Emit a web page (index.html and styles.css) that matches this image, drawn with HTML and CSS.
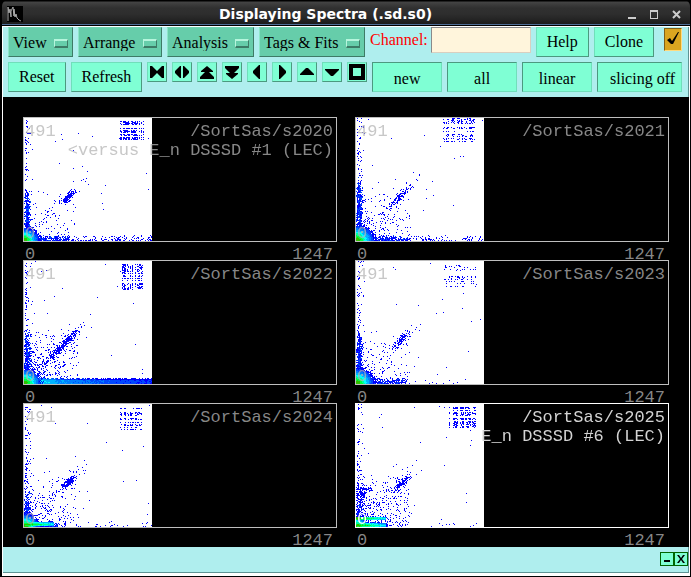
FILE: index.html
```html
<!DOCTYPE html>
<html lang="en">

<head>
    <meta charset="utf-8">
    <title>Displaying Spectra (.sd.s0)</title>
    <link rel="stylesheet" href="styles.css">
</head>

<body>
    <div class="window">
        <header class="titlebar">
            <svg class="app-icon" width="16" height="16" viewBox="0 0 16 16">
                <rect width="16" height="16" fill="#000"/>
                <path d="M1 15V1l1 6 1-4 1 8V5l2-4 1 9V3l1 8 1-3 1 4 2 2 2 1" fill="none" stroke="#aaa"/>
            </svg>
            <h1>Displaying Spectra (.sd.s0)</h1>
            <div class="controls">
                <button aria-label="Minimize"><svg width="9" height="9"><path d="M0 7h8v2H0z"/></svg></button>
                <button aria-label="Maximize"><svg width="9" height="9"><path d="M0 0h8v9H0zM1 2v6h6V2z" fill-rule="evenodd"/></svg></button>
                <button aria-label="Close"><svg width="9" height="9"><path d="M1 1l7 7M8 1L1 8" stroke="#ccc" stroke-width="2"/></svg></button>
            </div>
        </header>

        <main class="client">
            <div class="toolbar">
                <div class="row">
                    <span class="menu"><select aria-label="View"><option>View</option></select></span>
                    <span class="menu"><select aria-label="Arrange"><option>Arrange</option></select></span>
                    <span class="menu"><select aria-label="Analysis"><option>Analysis</option></select></span>
                    <span class="menu"><select aria-label="Tags and fits"><option>Tags &amp; Fits</option></select></span>
                    <div class="field">
                        <label for="channel">Channel:</label>
                        <input id="channel" type="text">
                    </div>
                    <button class="btn">Help</button>
                    <button class="btn">Clone</button>
                    <label class="tick">
                        <input type="checkbox" aria-label="Active" checked>
                        <svg width="14" height="14" viewBox="0 0 14 14"><path d="M1 8l3-2 2 3 6-9h1L7 12H5z"/></svg>
                    </label>
                </div>
                <div class="row">
                    <button class="btn">Reset</button>
                    <button class="btn">Refresh</button>
                    <button class="icon" aria-label="Squeeze"><svg width="14" height="12" viewBox="0 0 14 12"><path d="M0 0h2l5 5 5-5h2v12h-2L7 7l-5 5H0z"/></svg></button>
                    <button class="icon" aria-label="Stretch"><svg width="14" height="12" viewBox="0 0 14 12"><path d="M6 0v12H5L0 7V5l5-5zM8 0v12h1l5-5V5L9 0z"/></svg></button>
                    <button class="icon" aria-label="Scale up"><svg width="14" height="13" viewBox="0 0 14 13"><path d="M7 0l6 5v1H9l5 5v2H0v-2l5-5H1V5z"/></svg></button>
                    <button class="icon" aria-label="Scale down"><svg width="14" height="13" viewBox="0 0 14 13"><path d="M7 13l6-5V7H9l5-5V0H0v2l5 5H1v1z"/></svg></button>
                    <button class="icon" aria-label="Left"><svg width="14" height="14" viewBox="0 0 14 14"><path d="M10 0v14H9L3 8V6l6-6z"/></svg></button>
                    <button class="icon" aria-label="Right"><svg width="14" height="14" viewBox="0 0 14 14"><path d="M4 0v14h1l6-6V6L5 0z"/></svg></button>
                    <button class="icon" aria-label="Up"><svg width="14" height="12" viewBox="0 0 14 12"><path d="M6 2h2l6 6v1H0V8z"/></svg></button>
                    <button class="icon" aria-label="Down"><svg width="14" height="12" viewBox="0 0 14 12"><path d="M6 10h2l6-6V3H0v1z"/></svg></button>
                    <button class="icon" aria-label="Full"><svg width="16" height="16" viewBox="0 0 16 16"><path d="M0 0h16v16H0zM4 4v8h8V4z" fill-rule="evenodd"/></svg></button>
                    <button class="btn mode">new</button>
                    <button class="btn mode">all</button>
                    <button class="btn mode">linear</button>
                    <button class="btn mode wide">slicing off</button>
                </div>
            </div>

            <div class="spectra" id="spectra"></div>

            <footer class="footer">
                <button aria-label="Shrink"><svg width="10" height="10"><path d="M2 6h6v2H2z"/></svg></button>
                <button aria-label="Close panel"><svg width="10" height="10"><path d="M1 1h2l2 3 2-3h2L6 5l3 4H7L5 6 3 9H1l3-4z"/></svg></button>
            </footer>
        </main>
    </div>
    <script src="spectra.js"></script>
</body>

</html>
```
FILE: styles.css
```css
* {
    box-sizing: border-box;
}

body {
    margin: 0;
    background-color: #000;
    font: 16px "Liberation Serif", serif;
}

button {
    font: inherit;
    padding: 0;
    border: 0;
}

svg {
    display: block;
}

.window {
    display: flex;
    flex-direction: column;
    min-height: 100vh;
    padding: 0 1px 1px 2px;
    background-color: #000;
}

.titlebar {
    display: flex;
    align-items: center;
    height: 26px;
    padding: 2px 9px 0 5px;
    background: linear-gradient(#000 1px, #444 2px, #303030 8px, #2e2e2e 14px, #1c1c1c 24px, #4f6f98 24px, #4f6f98 25px, #000 25px);
    border-radius: 6px 6px 0 0;
}

.titlebar h1 {
    flex: 1;
    margin: 0;
    font: bold 14px/20px "DejaVu Sans", sans-serif;
    text-align: center;
    color: #fff;
}

.controls {
    display: flex;
    gap: 13px;
}

.controls button {
    background: none;
    fill: #ccc;
}

.client {
    flex: 1;
    display: flex;
    flex-direction: column;
    border: solid #fff;
    border-width: 1px 1px 3px 1px;
    background-color: #afeeee;
}

.toolbar {
    display: flex;
    flex-direction: column;
    gap: 5px;
    padding: 0 6px 5px 5px;
    border-right: 1px solid #5f9494;
}

.row {
    display: flex;
    align-items: flex-start;
    gap: 5px;
}

.menu {
    position: relative;
}

.menu select {
    appearance: none;
    display: block;
    height: 30px;
    padding: 0 25px 0 4px;
    font: inherit;
    color: #000;
    background-color: #66cdaa;
    border: 1px solid;
    border-color: #70d4b2 #3d7b66 #3d7b66 #8ce6c8;
    border-radius: 0;
}

/* raised bar of the option menu */
.menu::after {
    content: "";
    position: absolute;
    right: 5px;
    top: 12px;
    width: 12px;
    height: 5px;
    background-color: #66cdaa;
    border: solid;
    border-width: 2px 1px;
    border-color: #b5f5dc #3d7b66 #3d7b66 #b5f5dc;
    pointer-events: none;
}

.field {
    flex: 1;
    display: flex;
    gap: 3px;
    min-width: 0;
}

.field label {
    padding-top: 4px;
    line-height: 18px;
    color: #f00;
}

.field input {
    flex: 1;
    min-width: 0;
    height: 26px;
    margin: 0;
    padding: 0 4px;
    font: inherit;
    background-color: #fff5dc;
    border: 1px solid;
    border-color: #8a8a8a #d8cfc0 #d8cfc0 #8a8a8a;
}

.btn {
    height: 30px;
    padding: 0 10px;
    white-space: nowrap;
    background-color: #7fffd4;
    border: 1px solid;
    border-color: #70dfba #4c997f #4c997f #70dfba;
}

.mode {
    flex: 1 1 70px;
    padding: 4px 0 0;
    border-color: #4c997f #70dfba #70dfba #4c997f;
}

.wide {
    flex-basis: 85px;
    padding-left: 6px;
}

.icon {
    display: flex;
    align-items: center;
    justify-content: center;
    width: 20px;
    height: 20px;
    background-color: #7fffd4;
    border: 1px solid;
    border-color: #70dfba #4c997f #4c997f #70dfba;
}

.tick {
    position: relative;
    margin-left: 5px;
    padding-top: 1px;
}

.tick input {
    appearance: none;
    display: block;
    width: 18px;
    height: 23px;
    margin: 0;
    background-color: #daa520;
    border: 1px solid;
    border-color: #80601a #ffdb80 #ffdb80 #80601a;
}

.tick svg {
    position: absolute;
    left: 2px;
    top: 5px;
}

.spectra {
    flex: 1;
    display: grid;
    grid-template-columns: 1fr 1fr;
    column-gap: 18px;
    align-content: start;
    padding: 20px 20px 1px;
    background-color: #000;
    font: 17px/19px "Liberation Mono", monospace;
}

.spectrum {
    color: rgba(180, 180, 180, 0.75);
}

.frame {
    position: relative;
    height: 125px;
    border: 1px solid #bebebe;
}

.frame canvas {
    display: block;
}

.ymax, .ymin, .name {
    position: absolute;
    left: 1px;
    top: 4px;
}

.ymin {
    top: auto;
    bottom: -2px;
}

.name {
    left: auto;
    right: 3px;
    text-align: right;
    white-space: nowrap;
}

.axis {
    display: flex;
    justify-content: space-between;
    height: 18px;
    padding: 3px 4px 0 2px;
}

.selected .frame {
    border-color: #fff;
}

.selected .name {
    color: #d3d3d3;
}

.selected .ymax, .selected .ymin {
    color: #fff;
}

.footer {
    display: flex;
    justify-content: flex-end;
    height: 26px;
    padding-top: 5px;
    border: solid #5f9494;
    border-width: 0 1px 1px 0;
}

.footer button {
    width: 14px;
    height: 14px;
    padding: 1px;
    background-color: #7fffd4;
    border: 1px solid #006400;
}
```
FILE: spectra.js
```javascript
var W = 128, H = 123;

// wall: height of the dense left edge, floor: length of the dense bottom edge
// blob: radius of the hot corner, peak: [x, y, half length, counts]
// block: x, y (from top), width, height, fill of the hit pattern top right
// halo: scattered counts around the corner
var spectra = [
    { name: "/SortSas/s2020", title: "<versus E_n DSSSD #1 (LEC)", wall: 36, floor: 46, blob: 15, peak: [44, 43, 5, 130], block: [95, 0, 25, 22, 0.55], halo: 110, tail: 130 },
    { name: "/SortSas/s2021", wall: 48, floor: 52, blob: 18, peak: [43, 43, 9, 110], block: [87, 0, 32, 25, 0.35], halo: 230, tail: 90 },
    { name: "/SortSas/s2022", wall: 40, floor: 128, blob: 17, peak: [38, 38, 15, 330], block: [98, 3, 21, 26, 0.4], halo: 480, tail: 80 },
    { name: "/SortSas/s2023", wall: 36, floor: 50, blob: 18, peak: [45, 43, 6, 110], block: [88, 4, 32, 22, 0.25], halo: 190, tail: 12 },
    { name: "/SortSas/s2024", wall: 20, floor: 34, blob: 15, peak: [45, 45, 5, 140], block: [96, 4, 25, 22, 0.4], halo: 260, tail: 30, bands: [[2, 4, 30]] },
    { name: "/SortSas/s2025", title: "E_n DSSSD #6 (LEC)", wall: 12, floor: 32, blob: 12, peak: [45, 43, 6, 110], block: [93, 3, 27, 21, 0.5], halo: 420, tail: 12, bands: [[1, 4, 30], [8, 3, 30]], bar: 37, selected: true }
];

var colors = ["#0000ff", "#0048ff", "#0080ff", "#00b4ff", "#00ffff", "#00ffa0", "#00ff40", "#30c000"];

var seed = 1;

function rnd() {
    seed = (seed * 16807) % 2147483647;
    return seed / 2147483647;
}

function gauss() {
    return rnd() + rnd() + rnd() + rnd() - 2;
}

function draw(canvas, s) {
    var ctx = canvas.getContext("2d");
    var x, y, i;

    // y counts up from the bottom edge
    function dot(x, y, level) {
        x = Math.round(x);
        y = Math.round(y);
        if (x < 0 || y < 0) return;
        ctx.fillStyle = colors[Math.max(0, Math.min(7, Math.floor(level || 0)))];
        ctx.fillRect(x, H - 1 - y, 1, 1);
    }

    ctx.fillStyle = "#fff";
    ctx.fillRect(0, 0, W, H);

    // sparse background
    for (i = 0; i < 28; i++) dot(rnd() * W, rnd() * H);
    for (i = 0; i < s.halo; i++) dot(-Math.log(rnd()) * 15 % 52, rnd() * rnd() * 56);
    for (i = 0; i < s.halo / 4; i++) dot(22 + rnd() * 32, rnd() * 50);

    // left edge and its thin upper part
    for (i = 0; i < 130; i++) dot(rnd() * rnd() * 8 + 1, Math.pow(rnd(), 1.6) * H);
    for (i = 0; i < s.wall * 9; i++) {
        dot(3 + gauss() * 2.6, rnd() * (s.wall + rnd() * 16), rnd() * 1.8);
    }

    // bottom edge
    for (x = 0; x < s.floor; x++) {
        var top = s.floor == W ? 4 + rnd() * 2 : 2 + rnd() * 3.5;
        for (y = 0; y < top; y++) {
            if (s.floor == W) dot(x, y, (y > 3 ? 0 : 1.2) + 5 * Math.exp(-x / 26) - Math.max(0, x - 60) / 90 + rnd());
            else if (rnd() < 0.8) dot(x, y, rnd() * 1.5);
        }
    }
    for (i = 0; i < s.tail; i++) dot(s.floor + rnd() * (W - s.floor), rnd() * rnd() * 6);

    // diagonal
    for (i = 0; i < 36; i++) {
        x = 14 + rnd() * 50;
        dot(x + gauss() * 5, x + gauss() * 5);
    }
    for (i = 0; i < s.peak[3]; i++) {
        var t = gauss() * s.peak[2];
        dot(s.peak[0] + t + gauss() * 2.6, s.peak[1] + t + gauss() * 2.6);
    }

    // hit pattern, whole strips are either on or off
    var b = s.block, cols = [], rows = [];
    for (x = 0; x < b[2]; x++) cols.push(rnd() < 0.65);
    for (y = 0; y < b[3]; y++) rows.push(rnd() < 0.65);
    for (x = 0; x < b[2]; x++) {
        for (y = 0; y < b[3]; y++) {
            if (cols[x] && rows[y] && rnd() < b[4] * 1.3) dot(b[0] + x, H - 1 - b[1] - y);
        }
    }

    // hot corner
    for (x = 0; x < s.blob + 3; x++) {
        for (y = 0; y < s.blob + 3; y++) {
            var r = Math.sqrt(x * x * 0.9 + y * y * 1.2) / s.blob;
            if (r < 0.85 + rnd() * 0.25) dot(x, y, 8.4 * (1 - r * 1.05) + rnd() * 0.6);
        }
    }
    (s.bands || []).forEach(function (band) {
        for (x = 0; x < band[2]; x++) {
            for (y = 0; y < band[1]; y++) {
                dot(x, band[0] - 1 + y, 7.5 - x / 8 - Math.abs(y - 1) + rnd());
            }
        }
    });
    if (s.bar) {
        for (i = 0; i < 45; i++) dot(rnd() * 15, s.bar + gauss() * 1.5);
        for (i = 0; i < 60; i++) dot(5 + gauss() * 3, s.bar - 5 + gauss() * 5);
    }
}

spectra.forEach(function (s, i) {
    var cell = document.createElement("section");
    cell.className = s.selected ? "spectrum selected" : "spectrum";
    cell.innerHTML =
        '<div class="frame"><canvas width="' + W + '" height="' + H + '"></canvas>' +
        '<span class="ymax">491</span><span class="ymin">0</span>' +
        '<div class="name">' + s.name + (s.title ? "<br>" + s.title.replace("<", "&lt;") : "") + '</div></div>' +
        '<div class="axis"><span>0</span><span>1247</span></div>';
    document.getElementById("spectra").appendChild(cell);
    seed = 4321 + i * 777;
    draw(cell.querySelector("canvas"), s);
});
```
